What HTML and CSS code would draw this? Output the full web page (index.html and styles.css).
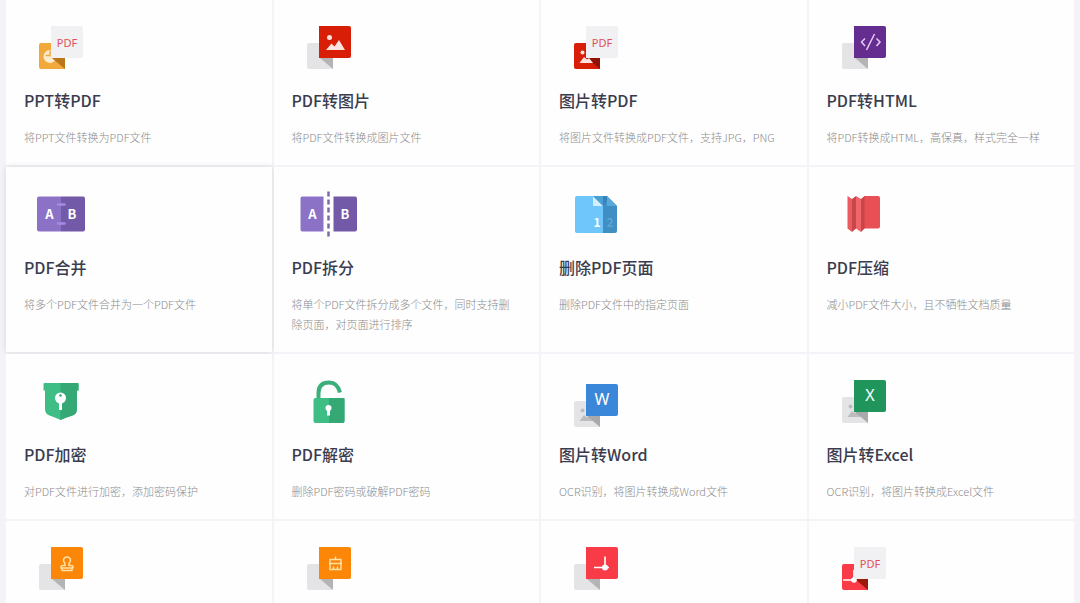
FILE: index.html
```
<!DOCTYPE html>
<html lang="zh-CN">
<head>
  <meta charset="UTF-8" />
  <meta name="viewport" content="width=device-width, initial-scale=1.0"/>
  <title>PDF</title>
  <link rel="stylesheet" href="styles.css">
</head>
<body>
  <!-- Shared icon parts -->
  <svg class="icon-defs" width="0" height="0">
    <defs>
      <path id="back" d="M17 31H41V57H17Q15 57 15 55V33Q15 31 17 31Z"/>
      <path id="fold" d="M28 46H41V57Z"/>
      <path id="front" d="M27 14H57Q59 14 59 16V44Q59 46 57 46H27Z"/>
      <g id="picture">
        <circle cx="37.500" cy="25.500" r="2.500"/>
        <path d="M34 38L39.500 31.500L42.500 34.500L47 28L53 38Z"/>
      </g>
      <g id="picture-small">
        <circle cx="23.500" cy="40.500" r="2"/>
        <path d="M20.500 51L25 45L28 47.500L30 46L34 51Z"/>
      </g>
    </defs>
  </svg>

  <main class="tool-grid">
    <a class="tool-card" href="#">
      <svg class="icon" viewBox="0 0 72 72">
        <use href="#back" fill="#f2a93b"/>
        <circle cx="26" cy="44.500" r="6.500" fill="#fdebd0"/>
        <path d="M21.500 43.500H26V38.500" fill="none" stroke="#f2a93b" stroke-width="1.500"/>
        <path d="M26 44L33 50.500L35 44Z" fill="#f2a93b"/>
        <use href="#fold" fill="#b9771a"/>
        <use href="#front" class="paper"/>
        <text class="pdf-label" x="43" y="35">PDF</text>
      </svg>
      <h3>PPT转PDF</h3>
      <p>将PPT文件转换为PDF文件</p>
    </a>
    <a class="tool-card" href="#">
      <svg class="icon" viewBox="0 0 72 72">
        <use href="#back" fill="#e4e4e6"/>
        <use href="#fold" fill="#b4b4b6"/>
        <use href="#front" fill="#d81e06"/>
        <use href="#picture" fill="#fbe3df"/>
      </svg>
      <h3>PDF转图片</h3>
      <p>将PDF文件转换成图片文件</p>
    </a>
    <a class="tool-card" href="#">
      <svg class="icon" viewBox="0 0 72 72">
        <use href="#back" fill="#d81e06"/>
        <use href="#fold" fill="#8f1305"/>
        <use href="#picture-small" fill="#fbe3df"/>
        <use href="#front" class="paper"/>
        <text class="pdf-label" x="43" y="35">PDF</text>
      </svg>
      <h3>图片转PDF</h3>
      <p>将图片文件转换成PDF文件，支持JPG，PNG</p>
    </a>
    <a class="tool-card" href="#">
      <svg class="icon" viewBox="0 0 72 72">
        <use href="#back" fill="#e4e4e6"/>
        <use href="#fold" fill="#b4b4b6"/>
        <use href="#front" fill="#662d91"/>
        <path d="M38 26.500L34.500 30L38 34M49.500 26.500L53 30L49.500 34M47.500 22L39.500 38" fill="none" stroke="#e6cdf5" stroke-width="1.500"/>
      </svg>
      <h3>PDF转HTML</h3>
      <p>将PDF转换成HTML，高保真，样式完全一样</p>
    </a>

    <a class="tool-card active" href="#">
      <svg class="icon" viewBox="0 0 72 72">
        <path d="M37 17.500H15Q13 17.500 13 19.500V50.500Q13 52.500 15 52.500H37Z" fill="#8b72c6"/>
        <path d="M37 17.500H59Q61 17.500 61 19.500V50.500Q61 52.500 59 52.500H37Z" fill="#735aa8"/>
        <path d="M34 25.500H40.500M34 44.500H40.500" stroke="#a78ae6" stroke-width="2.500" stroke-linecap="round"/>
        <text class="page-letter" x="25.500" y="40">A</text>
        <text class="page-letter" x="48" y="40">B</text>
      </svg>
      <h3>PDF合并</h3>
      <p>将多个PDF文件合并为一个PDF文件</p>
    </a>
    <a class="tool-card" href="#">
      <svg class="icon" viewBox="0 0 72 72">
        <path d="M31.500 17.500H10.500Q8.500 17.500 8.500 19.500V50.500Q8.500 52.500 10.500 52.500H31.500Z" fill="#8b72c6"/>
        <path d="M41.500 17.500H63Q65 17.500 65 19.500V50.500Q65 52.500 63 52.500H41.500Z" fill="#735aa8"/>
        <path d="M36.500 12.500V58" stroke="#7d68ad" stroke-width="2.500" stroke-dasharray="5 3"/>
        <text class="page-letter" x="20.500" y="40">A</text>
        <text class="page-letter" x="53" y="40">B</text>
      </svg>
      <h3>PDF拆分</h3>
      <p>将单个PDF文件拆分成多个文件，同时支持删除页面，对页面进行排序</p>
    </a>
    <a class="tool-card" href="#">
      <svg class="icon" viewBox="0 0 72 72">
        <path d="M34 17H48L58 27V52Q58 54 56 54H42Z" fill="#3f8fc4"/>
        <path d="M18 17H34L44 27V54H18Q16 54 16 52V19Q16 17 18 17Z" fill="#6ec6fb"/>
        <path d="M34 17L44 27H34Z" fill="#d3efff"/>
        <path d="M34 17H44V27Z" fill="#4a9fd4"/>
        <path d="M44 17H48V21L44 27Z" fill="#3585bb"/>
        <path d="M48 17V27H58Z" fill="#57a9da"/>
        <text class="page-number" x="38" y="48">1</text>
        <text class="page-number dim" x="51" y="48">2</text>
      </svg>
      <h3>删除PDF页面</h3>
      <p>删除PDF文件中的指定页面</p>
    </a>
    <a class="tool-card" href="#">
      <svg class="icon" viewBox="0 0 72 72">
        <path d="M37 17H51Q53 17 53 19V47.500Q53 49.500 51 49.500H37Z" fill="#e85055"/>
        <path d="M20.500 17L25 20V53L20.500 49.500Z" fill="#ea5a5f"/>
        <path d="M25 20L29 17V49.500L25 53Z" fill="#c8454a"/>
        <path d="M29 17L34 20V53L29 49.500Z" fill="#f0656a"/>
        <path d="M34 20L37.500 17V49.500L34 53Z" fill="#c8454a"/>
      </svg>
      <h3>PDF压缩</h3>
      <p>减小PDF文件大小，且不牺牲文档质量</p>
    </a>

    <a class="tool-card" href="#">
      <svg class="icon" viewBox="0 0 72 72">
        <path d="M20.500 17H53.500Q54.500 17 54.500 18V24.500H53V43Q53 48 48.500 49.500Q40 52 36.500 54Q33 52 25.500 49.500Q21 48 21 43V24.500H19.500V18Q19.500 17 20.500 17Z" fill="#3ebd85"/>
        <path d="M36.500 17H53.500Q54.500 17 54.500 18V24.500H53V43Q53 48 48.500 49.500Q40 52 36.500 54Z" fill="#35a876"/>
        <circle cx="36.500" cy="32" r="5.500" fill="#fff"/>
        <path d="M35 36H38V44H35Z" fill="#fff"/>
        <circle cx="36.500" cy="29.500" r="1.300" fill="#35a876"/>
      </svg>
      <h3>PDF加密</h3>
      <p>对PDF文件进行加密，添加密码保护</p>
    </a>
    <a class="tool-card" href="#">
      <svg class="icon" viewBox="0 0 72 72">
        <path d="M26.500 33V27Q26.500 16.500 37 16.500Q45.500 16.500 48 26.500" fill="none" stroke="#3aaf7b" stroke-width="4"/>
        <rect x="21.500" y="32" width="31" height="25" rx="2" fill="#3ebd85"/>
        <path d="M37 32H52.500V55Q52.500 57 50.500 57H37Z" fill="#35a876"/>
        <circle cx="36.500" cy="42" r="3" fill="#fff"/>
        <path d="M35 43H38V49.500H35Z" fill="#fff"/>
      </svg>
      <h3>PDF解密</h3>
      <p>删除PDF密码或破解PDF密码</p>
    </a>
    <a class="tool-card" href="#">
      <svg class="icon" viewBox="0 -4 72 72">
        <use href="#back" fill="#e4e4e6"/>
        <use href="#picture-small" fill="#bcbcbe"/>
        <use href="#fold" fill="#a9a9ab"/>
        <use href="#front" fill="#3a86d8"/>
        <text class="file-letter" x="43" y="35">W</text>
      </svg>
      <h3>图片转Word</h3>
      <p>OCR识别，将图片转换成Word文件</p>
    </a>
    <a class="tool-card" href="#">
      <svg class="icon" viewBox="0 0 72 72">
        <use href="#back" fill="#e4e4e6"/>
        <use href="#picture-small" fill="#bcbcbe"/>
        <use href="#fold" fill="#a9a9ab"/>
        <use href="#front" fill="#1f955c"/>
        <text class="file-letter" x="43" y="35">X</text>
      </svg>
      <h3>图片转Excel</h3>
      <p>OCR识别，将图片转换成Excel文件</p>
    </a>

    <a class="tool-card" href="#">
      <svg class="icon" viewBox="0 0 72 72">
        <use href="#back" fill="#e4e4e6"/>
        <use href="#fold" fill="#b4b4b6"/>
        <use href="#front" fill="#fc8608"/>
        <path d="M41 32.500V30.500Q39 28 39.500 26.500Q40.500 24 43 24Q45.500 24 46.500 26.500Q47 28 45 30.500V32.500H47.500Q49 32.500 49 34V35H37V34Q37 32.500 38.500 32.500ZM38 35V37.500H48V35" fill="none" stroke="#ffe2a8" stroke-width="1.600" stroke-linejoin="round"/>
      </svg>
    </a>
    <a class="tool-card" href="#">
      <svg class="icon" viewBox="0 0 72 72">
        <use href="#back" fill="#e4e4e6"/>
        <use href="#fold" fill="#b4b4b6"/>
        <use href="#front" fill="#fc8608"/>
        <path d="M43.500 23.500V26.500M38 30V26.500H49V30M37 30.500H50M38 30.500V36.500H49V30.500M41.500 36V33.500M45.500 36V33.500" fill="none" stroke="#ffe2a8" stroke-width="1.400"/>
      </svg>
    </a>
    <a class="tool-card" href="#">
      <svg class="icon" viewBox="0 0 72 72">
        <use href="#back" fill="#e4e4e6"/>
        <use href="#fold" fill="#b4b4b6"/>
        <use href="#front" fill="#f93a47"/>
        <path d="M46 23.500V34.500M35 34.500H50" stroke="#fff" stroke-width="1.600"/>
        <circle cx="46" cy="34.500" r="3" fill="#fff"/>
      </svg>
    </a>
    <a class="tool-card" href="#">
      <svg class="icon" viewBox="0 0 72 72">
        <use href="#back" fill="#f93a47"/>
        <use href="#fold" fill="#9b1a0c"/>
        <path d="M16 47H29M27 37V47" stroke="#fff" stroke-width="1.600"/>
        <circle cx="27" cy="47" r="2.800" fill="#fff"/>
        <use href="#front" class="paper"/>
        <text class="pdf-label" x="43" y="35">PDF</text>
      </svg>
    </a>
  </main>
</body>
</html>
```
FILE: styles.css
```
* {
  box-sizing: border-box;
  margin: 0;
  padding: 0;
}

body {
  font-family: "Noto Sans CJK SC", sans-serif;
  background-color: #f4f4f8;
}

.icon-defs {
  display: block;
}

.tool-grid {
  display: grid;
  grid-template-columns: repeat(4, 1fr);
  gap: 2px;
  padding: 0 6px;
}

.tool-card {
  display: block;
  padding: 12px 20px 0 18px;
  background-color: #fefefe;
  color: #3a3c4e;
  text-decoration: none;
}

.tool-card.active {
  box-shadow: 0 0 6px rgba(0, 0, 0, 0.12);
}

.tool-card h3 {
  margin-top: 4px;
  font-size: 16px;
  line-height: 24px;
  font-weight: 500;
}

.tool-card p {
  margin: 15px 0 18px;
  font-size: 11px;
  line-height: 20px;
  font-weight: 300;
  color: #8c8c8c;
}

.icon {
  display: block;
  width: 72px;
  height: 72px;
}

.icon text {
  text-anchor: middle;
}

.paper {
  fill: #f1f1f3;
}

.pdf-label {
  font-family: "Noto Sans", sans-serif;
  font-size: 11px;
  fill: #e0505c;
}

.page-letter {
  font-size: 13px;
  font-weight: 700;
  fill: #fff;
}

.page-number {
  font-size: 12px;
  font-weight: 700;
  fill: #fff;
}

.page-number.dim {
  fill: #5ba5d5;
}

.file-letter {
  font-family: "Noto Sans", sans-serif;
  font-size: 16px;
  fill: #fff;
}

@media (max-width: 768px) {
  .tool-grid {
    grid-template-columns: repeat(2, 1fr);
  }
}
```
